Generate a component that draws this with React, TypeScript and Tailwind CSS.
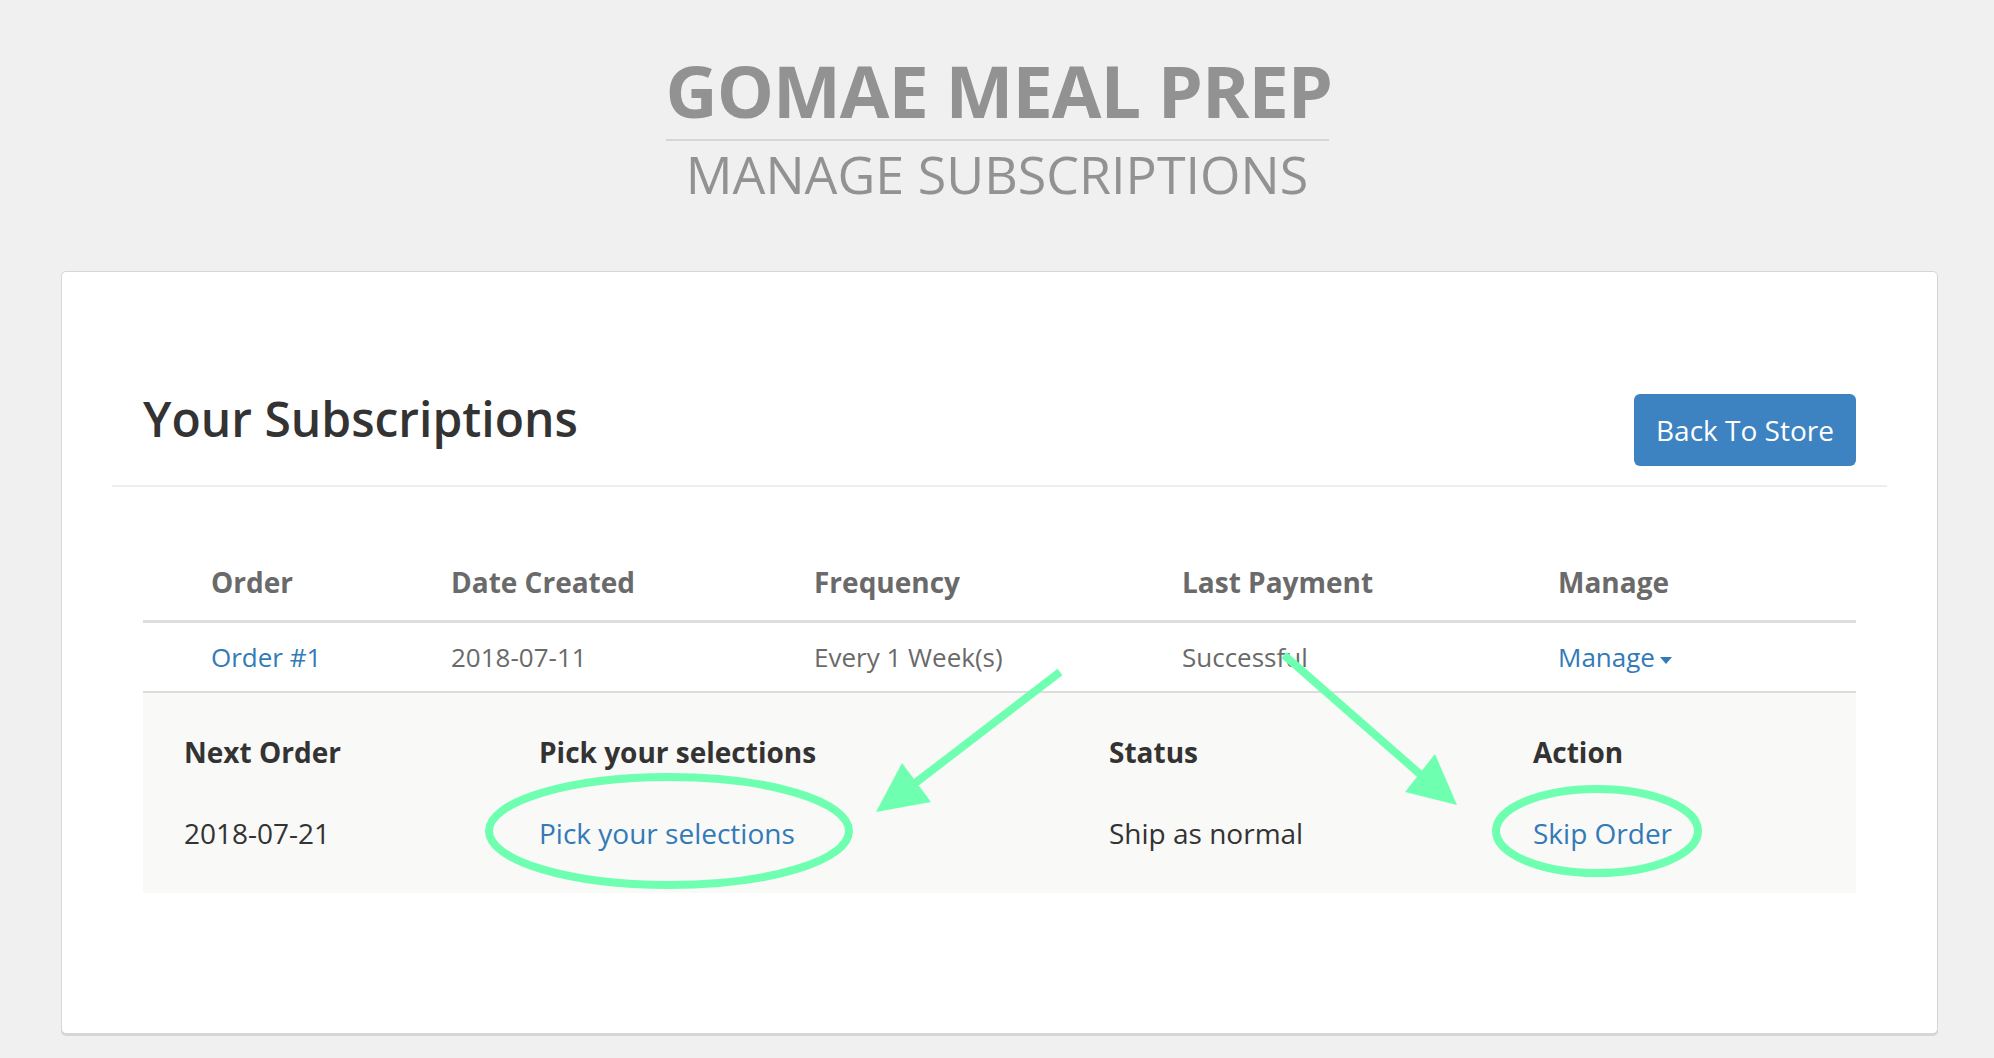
import React from 'react';

const font = { fontFamily: '"Open Sans", "Liberation Sans", sans-serif' };

function Caret() {
  return (
    <span className="ml-[5px] inline-block h-0 w-0 border-x-[6px] border-t-[7px] border-x-transparent border-t-[#337ab7] align-middle" />
  );
}

// green annotation marks drawn over the table
function Annotations() {
  return (
    <svg
      className="pointer-events-none absolute left-0 top-0"
      width={1994}
      height={1058}
      viewBox="0 0 1994 1058"
    >
      <g stroke="#6effb1" strokeWidth={8} fill="none">
        <ellipse cx={669} cy={831} rx={180} ry={54} />
        <ellipse cx={1597} cy={831} rx={101} ry={42} />
        <line x1={1060} y1={672} x2={914} y2={784} />
        <line x1={1284} y1={655} x2={1421} y2={775} />
      </g>
      <g fill="#6effb1">
        <polygon points="876,812 902,763 931,802" />
        <polygon points="1457,805 1435,754 1405,792" />
      </g>
    </svg>
  );
}

export default function App() {
  return (
    <div className="relative min-h-[1058px] w-full overflow-hidden bg-[#f0f0f0]" style={font}>
      {/* Header */}
      <div className="flex flex-col items-center pt-[54px]">
        <div className="w-[663px] whitespace-nowrap border-b-2 border-[#d6d6d6] pb-[13px] text-center text-[72px] font-bold leading-[72px] tracking-[-1px] text-[#929292]">
          GOMAE MEAL PREP
        </div>
        <div className="mt-[6px] whitespace-nowrap text-[52px] leading-[53px] text-[#929292]">MANAGE SUBSCRIPTIONS</div>
      </div>

      {/* Card */}
      <div className="ml-[61px] mt-[71px] w-[1877px] rounded-[5px] border border-[#d6d6d6] bg-white px-[50px] pb-[140px] pt-[120px] shadow-[0_2px_0_#d6d6d6]">
        <div className="flex items-start justify-between px-[31px]">
          <h2 className="text-[48px] font-semibold leading-[54px] text-[#333]">Your Subscriptions</h2>
          <button className="mt-[2px] h-[72px] w-[222px] rounded-[6px] bg-[#3d83c1] text-[28px] text-white">
            Back To Store
          </button>
        </div>
        <div className="mt-[19px] h-[2px] bg-[#eeeeee]" />

        <div className="mx-[31px] mt-[75px]">
          {/* table head */}
          <div className="grid grid-cols-[240px_363px_368px_376px_1fr] border-b-[3px] border-[#dddddd] pb-[18px] pl-[68px] text-[28px] font-bold leading-[40px] text-[#6a6a6a]">
            <div>Order</div>
            <div>Date Created</div>
            <div>Frequency</div>
            <div>Last Payment</div>
            <div>Manage</div>
          </div>
          {/* row */}
          <div className="grid grid-cols-[240px_363px_368px_376px_1fr] border-b-2 border-[#dddddd] py-[14px] pl-[68px] text-[26px] leading-[40px] text-[#6a6a6a]">
            <div className="text-[#337ab7]">Order #1</div>
            <div>2018-07-11</div>
            <div>Every 1 Week(s)</div>
            <div>Successful</div>
            <div className="text-[#337ab7]">
              Manage
              <Caret />
            </div>
          </div>
          {/* expanded details */}
          <div className="bg-[#f9f9f7] pb-[40px] pl-[41px] pt-[39px] text-[#333]">
            <div className="grid grid-cols-[355px_570px_424px_1fr] text-[28px] font-bold leading-[40px]">
              <div>Next Order</div>
              <div>Pick your selections</div>
              <div>Status</div>
              <div>Action</div>
            </div>
            <div className="mt-[41px] grid grid-cols-[355px_570px_424px_1fr] text-[28px] leading-[40px]">
              <div>2018-07-21</div>
              <div className="text-[#337ab7]">Pick your selections</div>
              <div>Ship as normal</div>
              <div className="text-[#337ab7]">Skip Order</div>
            </div>
          </div>
        </div>
      </div>

      <Annotations />
    </div>
  );
}
